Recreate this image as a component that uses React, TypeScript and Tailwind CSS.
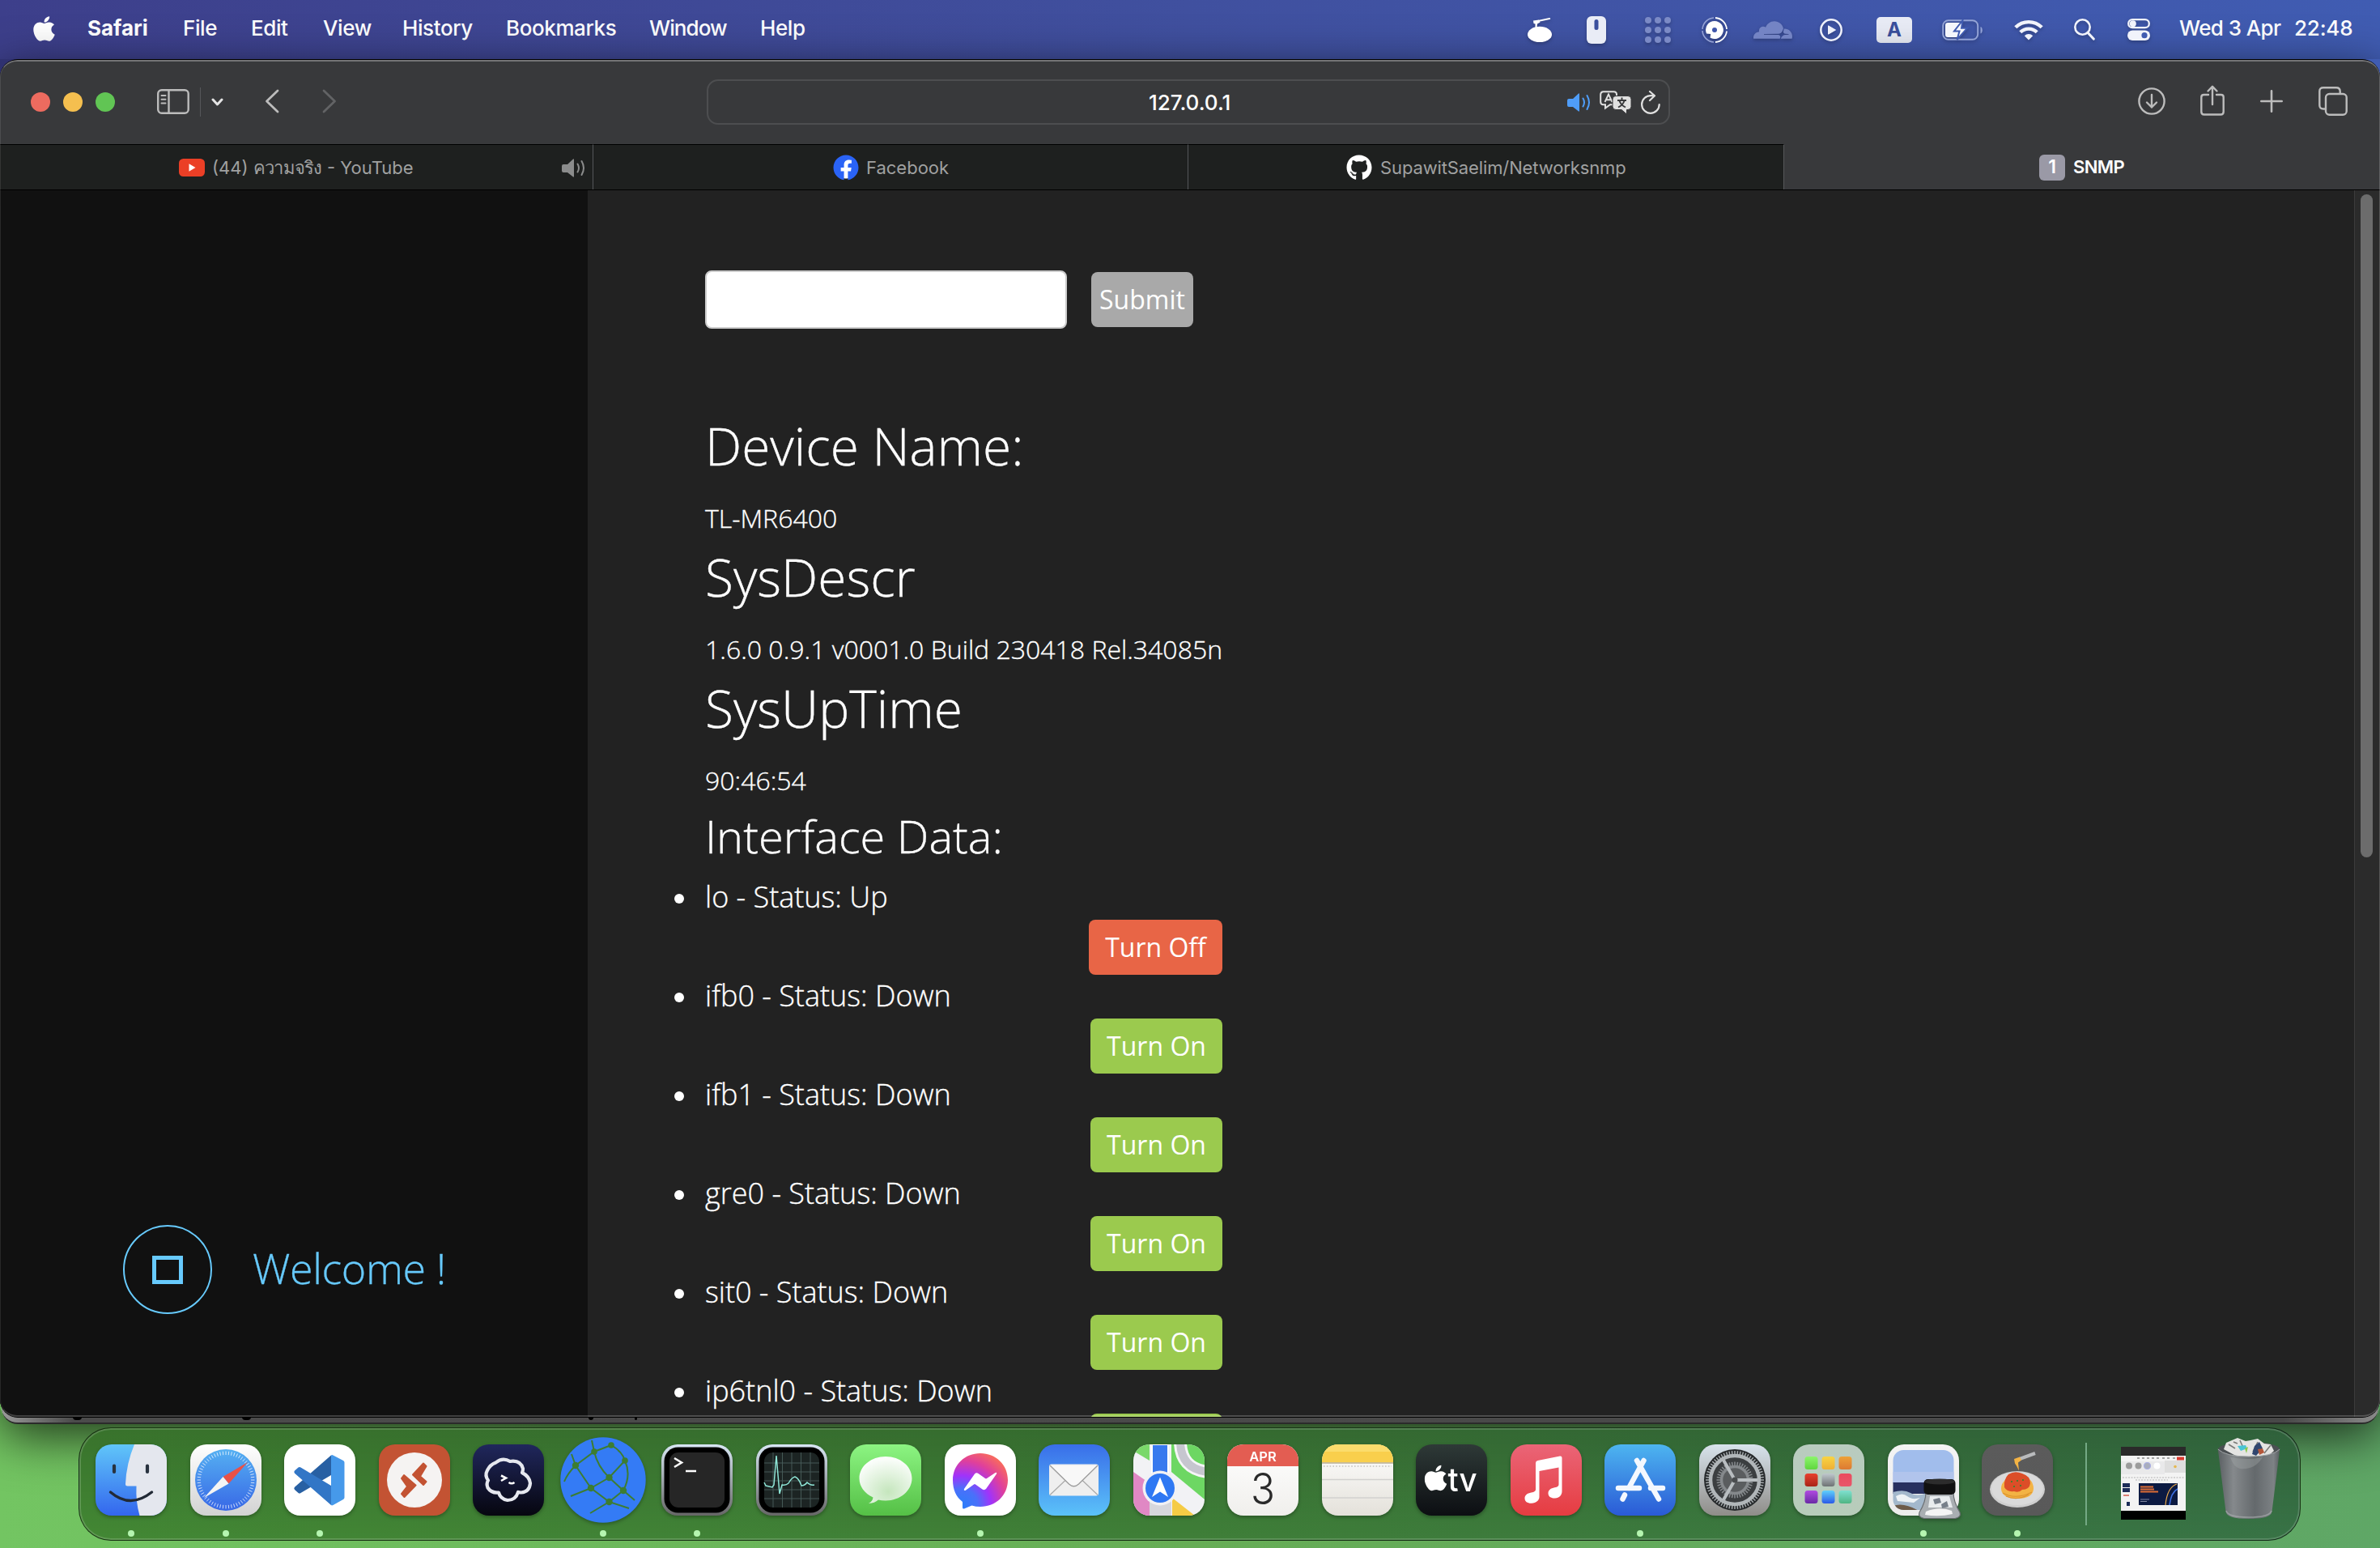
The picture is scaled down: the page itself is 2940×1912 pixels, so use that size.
import type { ReactNode } from "react";
import { FaApple, FaFacebook, FaGithub } from "react-icons/fa";
import { SiCloudflare } from "react-icons/si";

/* ---------- Menu bar ---------- */

function MenuBar() {
  return (
    <header className="flex h-[73px] shrink-0 items-center bg-linear-to-r from-[#3d3f8b] via-[#40509f] to-[#405cb2] font-['Inter',sans-serif] text-[26px] leading-[32px] font-medium tracking-[-0.4px] text-white">
      <FaApple className="mb-[3px] ml-[41px] h-[35px] w-[27px]" preserveAspectRatio="none" />
      <nav className="flex pb-1 pl-[40px] whitespace-nowrap">
        <span className="w-[118px] font-bold tracking-normal">Safari</span>
        <span className="w-[84px]">File</span>
        <span className="w-[89px]">Edit</span>
        <span className="w-[98px]">View</span>
        <span className="w-[128px]">History</span>
        <span className="w-[177px]">Bookmarks</span>
        <span className="w-[137px] tracking-[-0.9px]">Window</span>
        <span>Help</span>
      </nav>
      <div className="ml-auto flex items-center pr-[34px] [&>svg]:shrink-0 [&>svg]:drop-shadow-[0_2px_2px_rgba(0,0,0,0.25)]">
        <svg className="w-[30px] h-[30px]" viewBox="0 0 30 30" fill="#fff">
          <ellipse cx="15" cy="20.500" rx="15" ry="9.700" />
          <path d="M7 3.500 14 2.500 15.500 5.500 12 7.500 11.500 12H9.500L9.500 7.500 7.500 7Z" />
          <path d="M13 4 28 .8" stroke="#fff" strokeWidth="2" />
        </svg>
        <svg className="ml-[43px] w-[24px] h-[34px]" viewBox="0 0 24 34">
          <rect width="24" height="34" rx="6" fill="#e9ecf6" />
          <rect x="9.500" y="4" width="5" height="13" rx="2.500" fill="#3a4f9d" />
        </svg>
        <svg className="ml-[48px] w-[32px] h-[32px]" viewBox="0 0 32 32" fill="#7b8ac6">
          {[4, 16, 28].map((y) => [4, 16, 28].map((x) => <circle key={`${x}-${y}`} cx={x} cy={y} r="4" />))}
        </svg>
        <svg className="ml-[38px] w-[32px] h-[32px]" viewBox="0 0 32 32" fill="none">
          <path d="M17 1A15 15 0 0 1 31 15M31 17.500A15 15 0 0 1 17 31" stroke="#fff" strokeWidth="1.800" />
          <path d="M15 31A15 15 0 0 1 1 17M1 15A15 15 0 0 1 15 1" stroke="#96a3d6" strokeWidth="1.600" />
          <path d="M16 5A11 11 0 1 1 10.500 25.600L11.200 21 6 20.500A11 11 0 0 1 16 5Z" fill="#fff" />
          <circle cx="16" cy="16" r="3" fill="#3f56ab" />
        </svg>
        <SiCloudflare className="ml-[32px] h-[48px] w-[48px] text-[#7484c4]" />
        <svg className="ml-[34px] w-[28px] h-[28px]" viewBox="0 0 28 28">
          <circle cx="14" cy="14" r="12.700" fill="none" stroke="#eef0fa" strokeWidth="2.500" />
          <path d="M10.500 8.800v10.400l9-5.200z" fill="#eef0fa" stroke="#eef0fa" strokeWidth="1" strokeLinejoin="round" />
        </svg>
        <span className="ml-[42px] flex h-[32px] w-[44px] items-center justify-center rounded-[5px] bg-[#e9ecf6] text-[24px] font-bold tracking-normal text-[#3a4f9d]">A</span>
        <svg className="ml-[37px] w-[52px] h-[26px]" viewBox="0 0 52 26">
          <rect x="1.200" y="1.200" width="43" height="23.600" rx="6.500" fill="none" stroke="#93a3d6" strokeWidth="2" />
          <path d="M47.500 9v8.500c3-1 3-7.500 0-8.500z" fill="#93a3d6" />
          <path d="M7 4h18l-9 11h7l-2 7H7a3 3 0 0 1-3-3V7a3 3 0 0 1 3-3z" fill="#f4f6fc" />
          <path d="M25.500 1 15 14.500h6.500L18.500 25 31 10.800h-7z" fill="#f4f6fc" stroke="#405bb0" strokeWidth="2" />
        </svg>
        <svg className="ml-[37px] w-[36px] h-[26px]" viewBox="0 0 36 26" fill="none" stroke="#f1f3fb" strokeWidth="4.400">
          <path d="M1.800 9.800A23 23 0 0 1 34.200 9.800" />
          <path d="M7.800 15.800A14.600 14.600 0 0 1 28.200 15.800" />
          <path d="M18 25.500 12.800 20.200a7.400 7.400 0 0 1 10.400 0z" fill="#f1f3fb" stroke="none" />
        </svg>
        <svg className="ml-[38px] w-[26px] h-[27px]" viewBox="0 0 26 27" fill="none" stroke="#f1f3fb">
          <circle cx="10.500" cy="10.500" r="9.200" strokeWidth="2.600" />
          <path d="m17.200 17.500 7 7.500" strokeWidth="3.200" strokeLinecap="round" />
        </svg>
        <svg className="ml-[40px] w-[28px] h-[27px]" viewBox="0 0 28 27">
          <rect x="1.200" y="1.200" width="25.600" height="10" rx="5" fill="none" stroke="#f1f3fb" strokeWidth="2.300" />
          <circle cx="6.800" cy="6.200" r="4" fill="#f1f3fb" />
          <rect y="14.500" width="28" height="12.500" rx="6.250" fill="#f1f3fb" />
          <circle cx="21" cy="20.700" r="3.600" fill="#405bb0" />
        </svg>
        <span className="ml-[36px] w-[142px] pb-1 tracking-[-0.6px] whitespace-nowrap">Wed 3 Apr</span>
        <span className="w-[72px] pb-1 tracking-[-0.2px]">22:48</span>
      </div>
    </header>
  );
}

/* ---------- Browser chrome ---------- */

function Speaker({ className }: { className: string }) {
  return (
    <svg className={className} viewBox="0 0 29 23" fill="none" stroke="currentColor" strokeWidth="2" strokeLinecap="round">
      <path d="M2 7h5l7-6.500q1-.5 1 .8v20.400q0 1.300-1 .8L7 17H2Q0 17 0 15V9q0-2 2-2z" fill="currentColor" stroke="none" />
      <path d="M19.500 6.500q3 5 0 10M24.500 3q5 8.500 0 17" />
    </svg>
  );
}

function Toolbar() {
  return (
    <div className="flex h-[102px] shrink-0 items-center bg-[#38393b] pb-[2px] text-[#bcbcbc]">
      <div className="flex gap-4 pl-[38px] [&>i]:size-6 [&>i]:rounded-full">
        <i className="bg-[#ed6b5f]" />
        <i className="bg-[#f5bf4f]" />
        <i className="bg-[#61c554]" />
      </div>
      <svg className="mb-[2px] ml-[52px] w-[40px] h-[31px]" viewBox="0 0 40 31" fill="none" stroke="currentColor" strokeWidth="2.400">
        <rect x="1.200" y="1.200" width="37.500" height="28.600" rx="4.500" />
        <path d="M14.500 1v29" />
        <path d="M5.500 8h5M5.500 12.700h5M5.500 17.400h5" strokeWidth="2" strokeLinecap="round" />
      </svg>
      <span className="ml-[13px] h-9 w-px bg-[#55575a]" />
      <svg className="ml-[13px] w-[15px] h-[10px]" viewBox="0 0 15 10" fill="none" stroke="#e4e4e4" strokeWidth="3" strokeLinecap="round" strokeLinejoin="round">
        <path d="m2 2 5.500 6L13 2" />
      </svg>
      <svg className="mb-[2px] ml-[51px] w-[18px] h-[30px]" viewBox="0 0 18 30" fill="none" stroke="currentColor" strokeWidth="2.800" strokeLinecap="round" strokeLinejoin="round">
        <path d="M16 2 2.500 15 16 28" />
      </svg>
      <svg className="mb-[2px] ml-[53px] w-[18px] h-[30px]" viewBox="0 0 18 30" fill="none" stroke="#626365" strokeWidth="2.800" strokeLinecap="round" strokeLinejoin="round">
        <path d="M2 2 15.500 15 2 28" />
      </svg>
      <div className="ml-[457px] flex h-[56px] w-[1190px] items-center rounded-[14px] border-2 border-[#4d4e50] font-['Inter',sans-serif] text-[26px] font-medium text-white">
        <span className="ml-[544px] w-[517px]">127.0.0.1</span>
        <Speaker className="w-[29px] h-[23px] shrink-0 text-[#4f9df8]" />
        <svg className="ml-[11px] h-[29px] w-[39px] shrink-0" viewBox="0 0 39 29">
          <path d="M4.500 1.200h13q3.500 0 3.500 3.500v9q0 3.500-3.500 3.500H13l-6 4.300v-4.300H4.500Q1.200 17.200 1.200 13.700v-9Q1.200 1.200 4.500 1.200z" fill="none" stroke="#e0e0e0" strokeWidth="2" />
          <path d="M6.500 14 11 4.500 15.500 14M8 11.200h6" fill="none" stroke="#e0e0e0" strokeWidth="1.900" />
          <path d="M20 6.500h15q4 0 4 4v9q0 4-4 4h-1.500V29L27 23.500h-7q-4 0-4-4v-9q0-4 4-4z" fill="#e0e0e0" stroke="#38393b" strokeWidth="1" />
          <path d="M27.500 8.500v3M22 12h11M24.500 12.500q1.500 5 7.500 8M30.500 12.500q-1.500 5-7.500 8" fill="none" stroke="#38393b" strokeWidth="1.900" />
        </svg>
        <svg className="ml-[12px] h-[29px] w-[24px] shrink-0" viewBox="0 0 24 29" fill="none" stroke="#e0e0e0" strokeWidth="2.200" strokeLinecap="round" strokeLinejoin="round">
          <path d="M22.700 17A10.800 10.800 0 1 1 12 6.200h4.500M11 1l6 5.300-6 5.700" />
        </svg>
      </div>
      <svg className="mb-[2px] ml-auto w-[34px] h-[34px]" viewBox="0 0 34 34" fill="none" stroke="currentColor" strokeWidth="2.400" strokeLinecap="round" strokeLinejoin="round">
        <circle cx="17" cy="17" r="15.600" />
        <path d="M17 9v15.500M11 18.500l6 6 6-6" />
      </svg>
      <svg className="ml-[43px] mb-[4px] w-[30px] h-[38px]" viewBox="0 0 30 38" fill="none" stroke="currentColor" strokeWidth="2.400" strokeLinecap="round" strokeLinejoin="round">
        <path d="M10 12H4.500Q1.300 12 1.300 15v18q0 3.500 3.500 3.500h20.400q3.500 0 3.500-3.500V15q0-3-3.200-3H20M15 24V2M9.500 7.500 15 1.800l5.500 5.700" />
      </svg>
      <svg className="ml-[44px] mb-[3px] w-[28px] h-[28px]" viewBox="0 0 28 28" fill="none" stroke="currentColor" strokeWidth="2.600" strokeLinecap="round">
        <path d="M14 1.300v25.400M1.300 14h25.400" />
      </svg>
      <svg className="mr-[40px] ml-[44px] mb-[3px] w-[36px] h-[36px]" viewBox="0 0 36 36" fill="none" stroke="currentColor" strokeWidth="2.400">
        <rect x="9" y="9" width="25.700" height="25.700" rx="4.500" />
        <path d="M8.500 27.500H6q-4.700 0-4.700-4.500V5.700Q1.300 1.300 6 1.300h16q4.700 0 4.700 4.700v2.500" />
      </svg>
    </div>
  );
}

function Tabs() {
  return (
    <div className="flex h-[57px] shrink-0 border-b border-black font-['Inter',sans-serif] text-[22px] text-[#a0a1a1] [&>div]:pt-px">
      <div className="flex w-[733px] items-center border-t border-r border-t-black border-r-[#55575a] bg-[#1e201f] whitespace-nowrap">
        <svg className="ml-[221px] w-[32px] h-[22px]" viewBox="0 0 32 22">
          <rect width="32" height="22" rx="5.500" fill="#eb3f26" />
          <path d="m12.500 6.300 8 4.700-8 4.700z" fill="#fff" />
        </svg>
        <span className="ml-[9px] w-[51px]">(44)</span>
        <span className="w-[91px] tracking-[-0.8px]">ความจริง</span>
        <span>- YouTube</span>
        <Speaker className="ml-auto mr-[9px] h-[23px] w-[29px] text-[#8b8c8c]" />
      </div>
      <div className="flex w-[735px] items-center border-t border-r border-t-black border-r-[#55575a] bg-[#1e201f] pl-[296px]">
        <span className="flex size-8 rounded-full bg-[radial-gradient(circle,#fff_0_13px,transparent_14px)]">
          <FaFacebook className="size-8 text-[#2a63f6]" />
        </span>
        <span className="ml-[9px]">Facebook</span>
      </div>
      <div className="flex w-[736px] items-center border-t border-r border-t-black border-r-[#55575a] bg-[#1e201f] pl-[195px]">
        <FaGithub className="size-8 text-white" />
        <span className="ml-[10px] tracking-[-0.12px]">SupawitSaelim/Networksnmp</span>
      </div>
      <div className="flex flex-1 items-center bg-[#38393b] pl-[315px]">
        <span className="flex size-8 items-center justify-center rounded-[6px] bg-[#9a99a6] text-[23px] font-semibold text-white">1</span>
        <span className="ml-[10px] font-semibold tracking-[-0.6px] text-white">SNMP</span>
      </div>
    </div>
  );
}

/* ---------- Page ---------- */

const facts = [
  { title: "Device Name:", value: "TL-MR6400" },
  { title: "SysDescr", value: "1.6.0 0.9.1 v0001.0 Build 230418 Rel.34085n" },
  { title: "SysUpTime", value: "90:46:54" },
];

const interfaces = [
  { name: "lo", up: true, label: "Turn Off" },
  { name: "ifb0", up: false, label: "Turn On" },
  { name: "ifb1", up: false, label: "Turn On" },
  { name: "gre0", up: false, label: "Turn On" },
  { name: "sit0", up: false, label: "Turn On" },
  { name: "ip6tnl0", up: false, label: "" },
];

function Page() {
  return (
    <div className="flex min-h-0 flex-1 bg-[#222] font-['Open_Sans',sans-serif] font-light text-white">
      <aside className="flex w-[726px] shrink-0 items-end bg-[#111] pb-[127px] pl-[152px]">
        <div className="flex h-[110px] items-center text-[#67cafd]">
          <span className="flex size-[110px] items-center justify-center rounded-full border-2 border-[#67cafd]">
            <span className="h-[35px] w-[38px] border-[5px] border-[#67cafd]" />
          </span>
          <span className="ml-[50px] pb-1 text-[52px] leading-[100px] tracking-[-0.4px] [-webkit-text-stroke:0.3px]">Welcome !</span>
        </div>
      </aside>

      <main className="min-w-0 flex-1 overflow-hidden pt-[99px] pl-[145px]">
        <form className="flex h-[72px] items-center">
          <input className="h-[72px] w-[447px] rounded-[8px] border-2 border-[#ccc] bg-white" />
          <button type="button" className="ml-[30px] h-[68px] w-[126px] rounded-[8px] bg-[#a9a9a9] text-[32px] leading-[68px] font-normal">
            Submit
          </button>
        </form>

        <div className="pt-[109px] [-webkit-text-stroke:0.35px]">
          {facts.map((f) => (
            <section key={f.title} className="pb-[13px]">
              <h2 className="text-[64px] leading-[72px]">{f.title}</h2>
              <p className="pt-[29px] text-[32px] leading-[48px] whitespace-nowrap">{f.value}</p>
            </section>
          ))}
        </div>

        <h3 className="text-[56px] leading-[62px] [-webkit-text-stroke:0.35px]">Interface Data:</h3>
        <ul className="mt-[19px] w-[639px]">
          {interfaces.map((i) => (
            <li key={i.name} className="relative flex flex-col items-end">
              <span className="absolute top-[22px] left-[-38px] size-[12px] rounded-full bg-white" />
              <span className="w-full pb-[3px] text-[36px] leading-[51px] [-webkit-text-stroke:0.35px]">
                {i.name} - Status: {i.up ? "Up" : "Down"}
              </span>
              <button
                type="button"
                className={
                  i.up
                    ? "h-[68px] w-[165px] rounded-[8px] bg-[#e86546] text-[32px] leading-[68px] font-normal"
                    : "h-[68px] w-[163px] rounded-[8px] bg-[#9bca4e] text-[32px] leading-[68px] font-normal"
                }
              >
                {i.label}
              </button>
            </li>
          ))}
        </ul>
      </main>

      <div className="w-[32px] shrink-0 border-l border-[#3c3c3c] bg-[#2b2b2b] pt-[5px] pl-[7px]">
        <div className="h-[819px] w-[15px] rounded-full bg-[#6c6c6c]" />
      </div>
    </div>
  );
}

/* ---------- Dock ---------- */

function Tile({ id, from, to, children }: { id: string; from: string; to: string; children?: ReactNode }) {
  return (
    <>
      <defs>
        <linearGradient id={`${id}-bg`} x1="0" y1="0" x2="0" y2="1">
          <stop offset="0" stopColor={from} />
          <stop offset="1" stopColor={to} />
        </linearGradient>
        <clipPath id={`${id}-clip`}>
          <rect width="88" height="88" rx="20" />
        </clipPath>
      </defs>
      <g clipPath={`url(#${id}-clip)`}>
        <rect width="88" height="88" fill={`url(#${id}-bg)`} />
        {children}
      </g>
    </>
  );
}

function spokes(count: number, inner: number, outer: number) {
  let d = "";
  for (let i = 0; i < count; i++) {
    const a = (i / count) * Math.PI * 2;
    d += `M${44 + Math.cos(a) * inner} ${44 + Math.sin(a) * inner}L${44 + Math.cos(a) * outer} ${44 + Math.sin(a) * outer}`;
  }
  return d;
}

const padColors = [
  ["#8cf56c", "#5fd63e"], ["#f8d442", "#efb035"], ["#eda238", "#dd7a32"],
  ["#e8402f", "#a82417"], ["#bfc8cd", "#6e7274"], ["#ea4b5e", "#e8566a"],
  ["#b04be0", "#6a2aa6"], ["#5fd0fb", "#2a5ae8"], ["#7fe0d0", "#4fb583"],
];

const icons: { id: string; running?: boolean; art: ReactNode }[] = [
  {
    id: "finder",
    running: true,
    art: (
      <Tile id="finder" from="#60c6f9" to="#3366ee">
        <path d="M48 0Q38 24 37 49q0 2.500 2.500 2.500H50.500Q49.500 71 54.500 88H88V0z" fill="#e4e7ee" />
        <path d="M23 26.500v7.500M64 26.500v7.500" stroke="#28323f" strokeWidth="4.200" strokeLinecap="round" />
        <path d="M18.500 59Q43 80 69.500 59" fill="none" stroke="#222a36" strokeWidth="3.400" strokeLinecap="round" />
      </Tile>
    ),
  },
  {
    id: "safari",
    running: true,
    art: (
      <Tile id="safari" from="#ffffff" to="#d2d2d2">
        <defs>
          <linearGradient id="safari-face" x1="0" y1="0" x2="0" y2="1">
            <stop offset="0" stopColor="#55b0f2" />
            <stop offset="1" stopColor="#3868e6" />
          </linearGradient>
        </defs>
        <circle cx="44" cy="44" r="38" fill="url(#safari-face)" />
        <path d={spokes(60, 31, 35.500)} stroke="#fff" strokeOpacity=".75" strokeWidth="1" />
        <path d="M71 22 47.500 48.500 40.500 40z" fill="#ea5147" />
        <path d="M17 66 40.500 40 47.500 48.500z" fill="#f4f4f4" />
      </Tile>
    ),
  },
  {
    id: "vscode",
    running: true,
    art: (
      <Tile id="vscode" from="#ffffff" to="#ffffff">
        <path d="M58 13.500V38L20.500 60q-1.500 1-3 0l-4.500-4q-1.500-1.700 0-3.200z" fill="#2860a3" />
        <path d="M58 75V51L20.500 28.500q-1.500-1-3 0L13 32.500q-1.500 1.500 0 3.200z" fill="#3276c6" />
        <path d="M58 13.500q1-.8 2.500 0L73 20q1.500.8 1.500 2.500v43Q74.500 67 73 68l-12.500 7q-1.500.8-2.500 0z" fill="#4699ea" />
      </Tile>
    ),
  },
  {
    id: "remote",
    art: (
      <Tile id="remote" from="#c35333" to="#c35333">
        <circle cx="44" cy="44" r="34" fill="#f5f3f2" />
        <g fill="#c35333" stroke="#c35333" strokeWidth="2" strokeLinejoin="round">
          <path d="m55 23.500 3.500 3.500-7.500 12.500 7.500 6.500-3.500 4L42 37.500z" />
          <path d="m31 38 14.500 12.500L31.500 65l-3.500-4 7-9-7-10z" />
        </g>
      </Tile>
    ),
  },
  {
    id: "termius",
    art: (
      <Tile id="termius" from="#20275c" to="#06060f">
        <path d="M28.500 22.500q8.500-7 17.500-1.500 13-2 16 9 0 3-1 5 9 4.500 10 13-1 10.500-11 11.500-3 0-4-.5-3 10-13 10-9-1.500-11-9.500-9 1-13.500-6-2-5 .5-9-4.500-6-1-12.500 3.500-7 10.500-9.500z" fill="none" stroke="#e6e8ef" strokeWidth="4.200" strokeLinejoin="round" />
        <path d="m35 38.500 6 3-6 3.500M44.500 47q3.500 2.500 7 0" fill="none" stroke="#fff" strokeWidth="2.600" />
      </Tile>
    ),
  },
  {
    id: "globe",
    running: true,
    art: (
      <g>
        <circle cx="44" cy="44" r="52.700" fill="#347bf5" />
        <g stroke="#3d7d31" fill="none" strokeWidth="2">
          <path d="M54 1 33 9 10 26Q0 36-4 46M33 9q4 18 18.500 32M33 9 30-5M10 26q8 12 19 28M54 1q14 8 17 19M71 20 51.500 41 29 54 51.500 71 69 57 51.500 41M71 20q8 18-2 37M29 54 4 64M51.500 71 28 85M51.500 71 76 79M69 57l14 12M10 26 5 12" />
          <g fill="#3d7d31" stroke="none">
            <circle cx="54" cy="1" r="3.800" />
            <circle cx="33" cy="9" r="3.800" />
            <circle cx="71" cy="20" r="3.800" />
            <circle cx="10" cy="26" r="4.200" />
            <circle cx="51.500" cy="41" r="4.200" />
            <circle cx="29" cy="54" r="4.200" />
            <circle cx="69" cy="57" r="4.200" />
            <circle cx="51.500" cy="71" r="4.200" />
          </g>
        </g>
      </g>
    ),
  },
  {
    id: "terminal",
    running: true,
    art: (
      <Tile id="terminal" from="#d8e6f4" to="#666666">
        <rect x="3.500" y="3.500" width="81" height="81" rx="17" fill="#000" />
        <rect x="10" y="10" width="68" height="68" rx="11" fill="#262626" />
        <path d="m16 17 9 5.500-9 5.500" fill="none" stroke="#fff" strokeWidth="2.600" />
        <path d="M30 33h13" stroke="#fff" strokeWidth="2.600" />
      </Tile>
    ),
  },
  {
    id: "activity",
    art: (
      <Tile id="activity" from="#d8e6f4" to="#666666">
        <rect x="3.500" y="3.500" width="81" height="81" rx="17" fill="#000" />
        <rect x="10" y="10" width="68" height="68" rx="11" fill="#1c2423" />
        <path d="M21 10v68M32.500 10v68M44 10v68M55.500 10v68M67 10v68M10 23h68M10 34h68M10 45h68M10 56h68M10 67h68" stroke="#4a5f5b" strokeWidth=".9" />
        <path d="M10 47l2 4 8 2 2-3 3-36 4 47 3-11q5 1 8-2 4-7 8-8 5 2 8 11 4 0 7-4 4 4 9 3" fill="none" stroke="#8ee5d6" strokeWidth="1.500" />
      </Tile>
    ),
  },
  {
    id: "messages",
    art: (
      <Tile id="messages" from="#8cf482" to="#55c046">
        <defs>
          <radialGradient id="messages-bubble" cx=".55" cy=".75" r=".7">
            <stop offset="0" stopColor="#c5e6bd" />
            <stop offset="1" stopColor="#fafdfa" />
          </radialGradient>
        </defs>
        <path d="M44 15c18 0 32.500 12 32.500 27S62 69.500 44 69.500q-5 0-9-1-4.500 4-12 4.500 5-3 5.500-7.500C18 60.500 11.500 52 11.500 42 11.500 27 26 15 44 15z" fill="url(#messages-bubble)" />
      </Tile>
    ),
  },
  {
    id: "messenger",
    running: true,
    art: (
      <Tile id="messenger" from="#ffffff" to="#ffffff">
        <defs>
          <radialGradient id="messenger-bubble" cx=".15" cy=".95" r="1.100">
            <stop offset="0" stopColor="#2a7ff9" />
            <stop offset=".28" stopColor="#4a70fa" />
            <stop offset=".5" stopColor="#a033fa" />
            <stop offset=".75" stopColor="#e0409a" />
            <stop offset="1" stopColor="#fb7056" />
          </radialGradient>
        </defs>
        <path d="M44 11c19 0 34 14 34 33S63 77 44 77q-6 0-10.500-1.500L24 79.500q-2 .5-2-1.500v-7C14 65 10 56 10 44c0-19 15-33 34-33z" fill="url(#messenger-bubble)" />
        <path d="m24 55 13-18.500q2-2 4.500-.5L50 42q1 .8 2 0l10.500-7q2.500-1 1.500 1.500L51 55q-2 2-4.500.5L38 49.500q-1-.8-2 0L25.500 57q-2.500.5-1.500-2z" fill="#fff" />
      </Tile>
    ),
  },
  {
    id: "mail",
    art: (
      <Tile id="mail" from="#396ee9" to="#5bc2f9">
        <rect x="13" y="24.500" width="61" height="39" rx="3" fill="#efefef" />
        <path d="m14 62.500 21-20M73 62.500l-21-20" stroke="#a9a9a9" strokeWidth="1.200" />
        <path d="M14 26 37.500 49q6 5.500 12 0L73 26" fill="#f8f8f8" stroke="#9d9d9d" strokeWidth="1.400" />
      </Tile>
    ),
  },
  {
    id: "maps",
    art: (
      <Tile id="maps" from="#f2f2f5" to="#f2f2f5">
        <path d="M0 0h20v20L0 8z" fill="#7ad86a" />
        <path d="M47 0h41v68L47 34z" fill="#6dd763" />
        <path d="M58-4Q58 30 92 34" fill="none" stroke="#f5f5f7" strokeWidth="16" />
        <path d="M58-4Q58 30 92 34" fill="none" stroke="#c6c6cf" strokeWidth="10" />
        <path d="M0 34 20 48V88H0z" fill="#e088c4" />
        <path d="M20 60h27v28H20z" fill="#d6d7dc" />
        <path d="M48 66 76 88H48z" fill="#f5cb45" />
        <path d="M23 0h20v40H23z" fill="#3879ee" stroke="#fff" strokeWidth="2" />
        <circle cx="33" cy="54" r="21.500" fill="#f1f1f4" />
        <circle cx="33" cy="54" r="18" fill="#2f78f3" />
        <path d="m33 40.500 10 24.500-10-6.500L23 65z" fill="#fff" />
      </Tile>
    ),
  },
  {
    id: "calendar",
    art: (
      <Tile id="calendar" from="#ffffff" to="#f0efec">
        <path d="M0 0h88v27H0z" fill="#e35d52" />
        <text x="44" y="21" textAnchor="middle" fontFamily="Inter" fontWeight="600" fontSize="16.500" fill="#fff">APR</text>
        <text x="44" y="73.500" textAnchor="middle" fontFamily="Inter" fontWeight="300" fontSize="54" fill="#2a2a2a" textLength="30" lengthAdjust="spacingAndGlyphs">3</text>
      </Tile>
    ),
  },
  {
    id: "notes",
    art: (
      <Tile id="notes" from="#ffffff" to="#e4e1da">
        <path d="M0 0h88v22.500H0z" fill="#f9cf4c" />
        <path d="M0 0h88v9H0z" fill="#fbdc6c" />
        <path d="M0 23h88" stroke="#b9ae92" strokeWidth="1.600" />
        <path d="M2 27h84" stroke="#c4c2bc" strokeWidth="1.600" strokeDasharray="1.600 2.200" />
        <path d="M0 43.500h88M0 66h88" stroke="#d2d1cf" strokeWidth="1.600" />
      </Tile>
    ),
  },
  {
    id: "tv",
    art: (
      <Tile id="tv" from="#2e3937" to="#0c0e12">
        <FaApple x="10.500" y="23.500" className="h-[36px] w-[28px]" color="#fff" preserveAspectRatio="none" />
        <text x="39.500" y="57.500" fontFamily="Inter" fontWeight="500" fontSize="40" fill="#fff" textLength="36" lengthAdjust="spacingAndGlyphs">tv</text>
      </Tile>
    ),
  },
  {
    id: "music",
    art: (
      <Tile id="music" from="#ea6577" to="#e63c41">
        <path d="M31 23q0-2.500 2.500-3L61 14.500q2.500-.3 2.500 2V58c0 5-3.500 8-8.500 8.500-5 .3-8.500-2-8.500-6s3-6.500 8-7.300c4-.7 5-1.500 5-4.200V28.500L35.500 33v32c0 4-4 7.500-9.500 7.800-5 .2-8.500-2-8.500-6s3-6.500 8-7.300c4-.7 5.500-1.500 5.500-4.200z" fill="#fff" />
      </Tile>
    ),
  },
  {
    id: "appstore",
    running: true,
    art: (
      <Tile id="appstore" from="#4db5f0" to="#2a5ad6">
        <g stroke="#f4f8fe" strokeWidth="6.500" strokeLinecap="round" fill="none">
          <path d="M48.500 20 30 54M40 20l27 47.500M17 54h26M57 54h15M25 62.500 22.500 67.500" />
        </g>
      </Tile>
    ),
  },
  {
    id: "settings",
    art: (
      <Tile id="settings" from="#d8e3ec" to="#8f8d89">
        <circle cx="44" cy="44" r="38" fill="#26292b" />
        <path d={spokes(64, 31, 36)} stroke="#a4a9ac" strokeWidth="1.500" />
        <circle cx="44" cy="44" r="30" fill="#3b3e40" stroke="#b1b6b9" strokeWidth="4.500" />
        <path d={spokes(40, 18, 22.500)} stroke="#85898c" strokeWidth="1.600" />
        <circle cx="44" cy="44" r="16.500" fill="#5a5d5f" stroke="#85898c" strokeWidth="3.500" />
        <path d="M44 44h28M44 44 30 19.500M44 44 30 68.500" stroke="#b8bdc0" strokeWidth="4" />
        <circle cx="44" cy="44" r="3.500" fill="#4a4d4f" />
      </Tile>
    ),
  },
  {
    id: "launchpad",
    art: (
      <Tile id="launchpad" from="#b9cbbf" to="#b7ccba">
        {padColors.map(([a, b], i) => (
          <g key={a}>
            <defs>
              <linearGradient id={`pad-${i}`} x1="0" y1="0" x2="0" y2="1">
                <stop offset="0" stopColor={a} />
                <stop offset="1" stopColor={b} />
              </linearGradient>
            </defs>
            <rect x={14.500 + (i % 3) * 21} y={15 + Math.floor(i / 3) * 21} width="16" height="16" rx="3.500" fill={`url(#pad-${i})`} />
          </g>
        ))}
      </Tile>
    ),
  },
  {
    id: "preview",
    running: true,
    art: (
      <g>
        <Tile id="preview" from="#f4f4f4" to="#ececec">
          <defs>
            <clipPath id="preview-photo">
              <rect x="6.500" y="7" width="75" height="74" rx="13" />
            </clipPath>
          </defs>
          <g clipPath="url(#preview-photo)">
            <path d="M6 6h77v42H6z" fill="#a1bdec" />
            <path d="M6 34h77v14H6z" fill="#b1c4ec" />
            <path d="M6 47h77v14H6z" fill="#27305f" />
            <path d="M6 59q14-4 22 1t20 0l35-2v26H6z" fill="#a3b8cc" />
            <path d="M10 64q8-5 14 0t16 2l-8 6-20-2z" fill="#eef3f6" />
            <path d="M6 76q14-5 32 6H6z" fill="#6d5b49" />
          </g>
        </Tile>
        <path d="M47 59h34q0 12 8 25 2 6-6 7.500H45q-8-1.500-6-7.500 8-13 8-25z" fill="#a9aeb2" stroke="#6a6e71" strokeWidth="1.200" />
        <path d="M52 64h24l4 14H50z" fill="#e8ecee" />
        <path d="m56 68 8-2 2 6-8 2zM66 74l7-4 2 7-8 2z" fill="#77808a" />
        <path d="M47 83q17-7 32-1l1 4q-17 4-34 1z" fill="#f4f4f4" />
        <rect x="44.500" y="43" width="39" height="19" rx="5" fill="#111" />
        <ellipse cx="64" cy="46" rx="18.500" ry="3.600" fill="#2c2c2c" />
      </g>
    ),
  },
  {
    id: "pasta",
    running: true,
    art: (
      <Tile id="pasta" from="#5b5b5b" to="#595959">
        <ellipse cx="44" cy="55.500" rx="34" ry="22.500" fill="#cfcfcf" />
        <ellipse cx="44" cy="54.500" rx="32" ry="20.500" fill="#dadada" />
        <path d="M24 55q0-14 20-15t20 15q-1 12-20 12T24 55z" fill="#f3b344" />
        <path d="M26 60q16 9 36-1M30 64q14 6 28-2" fill="none" stroke="#dc952f" strokeWidth="1.200" />
        <path d="M33 37q8-5 17-1 10 3 10 12-1 8-10 8-4 4-10 2-9 1-12-5-1-10 5-16z" fill="#dc4e28" />
        <path d="M36 46h2M43 45h2M50 44h2M39 52h2M47 51h2" stroke="#4f7b2a" strokeWidth="2" />
        <path d="m47 18 19-7" stroke="#b9bbbd" strokeWidth="4" />
        <path d="m40 18 7-2.500 2 4-4 3 1 10-3-6-2-3z" fill="#f3b344" />
      </Tile>
    ),
  },
];

function MinimizedWindow() {
  return (
    <svg className="h-[90px] w-[80px]" viewBox="0 0 80 90">
      <rect width="80" height="90" fill="#000" />
      <rect width="80" height="11" fill="#2a2a2a" />
      <rect y="11" width="80" height="68" fill="#f3f3f3" />
      <rect y="18" width="54" height="16" fill="#e9e9ea" />
      <rect x="54" y="17" width="26" height="15" fill="#dedede" />
      <rect x="69" y="12.500" width="9" height="4" fill="#d93b30" />
      <g fill="#9c9c9c">
        <circle cx="10" cy="23.500" r="4" />
        <circle cx="21.500" cy="23.500" r="4" />
      </g>
      <circle cx="32.500" cy="23.500" r="4" fill="#a9adbc" stroke="#a9aee6" strokeWidth="1.200" />
      <circle cx="44.500" cy="23.500" r="4" fill="#fff" />
      <circle cx="67" cy="24.500" r="1.800" fill="#e5b850" />
      <path d="M20 14h28M51 14h3M57 14h4M64 14h3" stroke="#8a8a8a" strokeWidth="1.300" strokeDasharray="3 3" />
      <path d="M2 38h76M18 41h40" stroke="#c9c9c9" strokeWidth="1.300" strokeDasharray="2 1.500" />
      <rect x="2" y="45" width="9" height="5" fill="#1c2c58" />
      <rect x="2" y="51" width="9" height="5" fill="#1c2c58" />
      <rect x="7" y="68" width="4" height="5" fill="#1c2c58" />
      <path d="M3 60h7" stroke="#d05a4a" strokeWidth="1.500" />
      <rect x="22" y="45" width="48" height="27" fill="#0c1a42" />
      <path d="M24 49.500h16M24 52.500h17M24 55.500h22" stroke="#dd6d35" strokeWidth="1.800" />
      <path d="M24 65h11M24 67.500h8" stroke="#8b93ab" strokeWidth=".9" />
      <path d="M55 72q2-22 14-26" fill="none" stroke="#e8a84a" strokeWidth="1.200" />
      <path d="M60 72q2-16 10-20" fill="none" stroke="#3d6fe0" strokeWidth="1.600" />
    </svg>
  );
}

function Trash() {
  return (
    <svg className="h-[101px] w-[78px]" viewBox="0 0 78 101">
      <defs>
        <linearGradient id="trash-body" x1="0" x2="1">
          <stop offset="0" stopColor="#5b6063" />
          <stop offset=".25" stopColor="#85898c" />
          <stop offset=".6" stopColor="#64696c" />
          <stop offset=".9" stopColor="#7d8285" />
          <stop offset="1" stopColor="#585d60" />
        </linearGradient>
      </defs>
      <ellipse cx="39" cy="14" rx="38" ry="9" fill="#4b5053" />
      <path d="m8 14 3-8 14-6 10 4 6-1 9-2 8 6 8 1 4 8-10 9-30 1z" fill="#e4e4e2" />
      <path d="m14 8 8 5M28 3l4 9M50 5l-6 12M66 9l-8 10M20 5l5 2" stroke="#7a7a78" strokeWidth="1.600" />
      <path d="m25 10 10-1 2 4-8 3z" fill="#48c4d4" />
      <path d="m34 13 4-2-2 8z" fill="#8ac94c" />
      <path d="m46 10 6-5 4 8-8 9-5-2z" fill="#31466f" />
      <path d="m50 14 6-1 2 5-6 3z" fill="#b4573a" />
      <path d="M.8 14Q10 23 39 23t38.200-9L67.500 91q-1 9-28.500 9T10.500 91z" fill="url(#trash-body)" />
      <path d="M16 24q22 4 40 0-10 16-28 14-8-2-12-14z" fill="#a7abad" fillOpacity=".35" />
      <path d="M.8 14Q10 23 39 23t38.200-9" fill="none" stroke="#a2a6a8" strokeWidth="1" />
      <path d="M11 90q2 8 28 8t28-8" fill="none" stroke="#a7abad" strokeWidth="1.600" strokeOpacity=".7" />
    </svg>
  );
}

function Dock() {
  return (
    <div className="relative mt-[4px] ml-[97px] flex h-[140px] w-[2745px] shrink-0 items-start rounded-[40px] border border-black/60 bg-[linear-gradient(to_bottom,rgba(0,0,0,0.16),transparent),linear-gradient(to_right,#438834,#3f7f38_50%,#387346)] pl-[6px] shadow-[inset_0_0_0_2px_rgba(255,255,255,0.16)]">
      {icons.map((icon) => (
        <div key={icon.id} className="flex h-[138px] w-[116.5px] shrink-0 flex-col items-center pt-[20px]">
          <svg className="size-[88px] overflow-visible drop-shadow-[0_2px_2px_rgba(0,0,0,0.3)]" viewBox="0 0 88 88">
            {icon.art}
          </svg>
          {icon.running && <span className="mt-[18px] size-2 rounded-full bg-[#b5f5b0]" />}
        </div>
      ))}
      <span className="mt-[18px] ml-[25px] h-[102px] w-[2px] shrink-0 bg-[#74a984]" />
      <div className="mt-[23px] ml-[42px]">
        <MinimizedWindow />
      </div>
      <div className="mt-[12px] ml-[39px]">
        <Trash />
      </div>
    </div>
  );
}

export default function App() {
  return (
    <div className="flex h-[1912px] w-[2940px] flex-col overflow-hidden bg-linear-to-r from-[#73c562] via-[#66ad55] to-[#5fa766]">
      <MenuBar />
      <div className="flex h-[1686px] shrink-0 flex-col rounded-b-[24px] bg-[linear-gradient(to_right,#2f3170,#405cb2)] bg-[length:100%_60px] bg-no-repeat shadow-[0_16px_60px_rgba(0,0,0,0.7)] [&>*]:shrink-0">
        <div className="relative z-10 flex h-[1678px] flex-col overflow-hidden rounded-[22px] border-y border-black bg-[#38393b] pt-[2px]">
          <Toolbar />
          <Tabs />
          <Page />
          <div className="pointer-events-none absolute inset-0 rounded-[21px] border-2 border-t-white/30 border-r-white/20 border-b-white/20 border-l-white/10 border-x" />
        </div>
        <div className="mx-[2px] -mt-[24px] flex h-[32px] items-end rounded-b-[20px] border-b-2 border-[#2b2b2b] bg-[linear-gradient(to_right,#9a9a9a,#4b4b4b_3%,#484848_96%,#8a8a8a)] pb-[3px] [&>i]:h-[4px] [&>i]:rounded-b-full [&>i]:bg-black">
          <i className="ml-[88px] w-[11px]" />
          <i className="ml-[198px] w-[11px]" />
          <i className="ml-[417px] w-[6px]" />
          <i className="ml-[51px] w-[3px]" />
        </div>
      </div>
      <Dock />
    </div>
  );
}
